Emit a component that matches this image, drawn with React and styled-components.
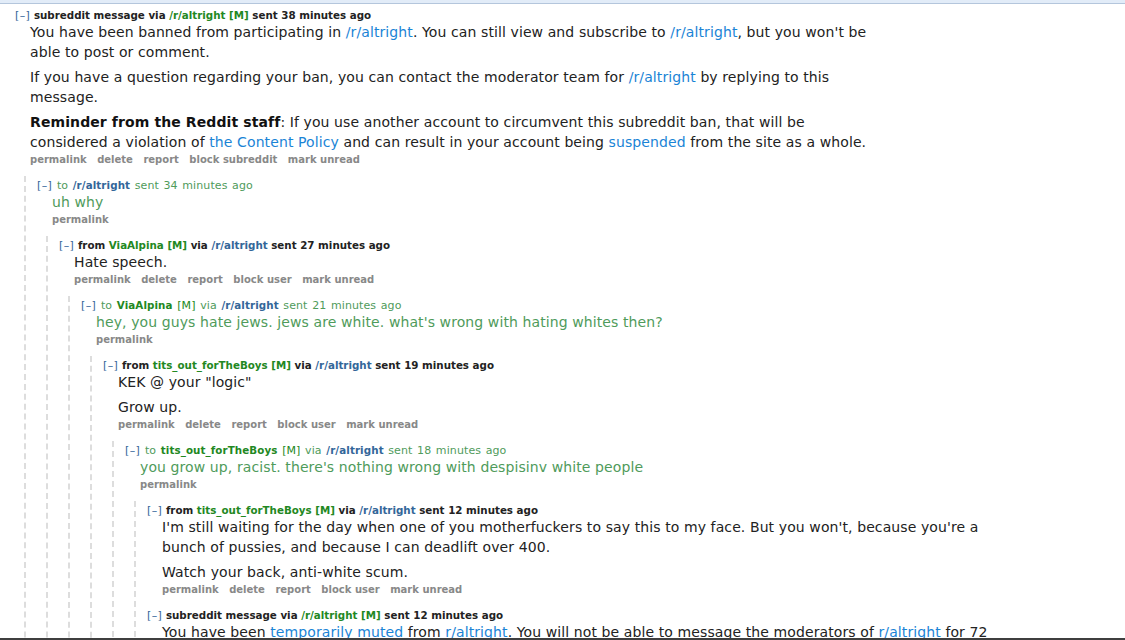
import React from "react";
import styled, { createGlobalStyle } from "styled-components";

const GREEN = "#228822";
const BLUE = "#336699";
const ME = "#4f9b5b";
const LINK = "#1a84d6";

const GlobalStyle = createGlobalStyle`
  html, body {
    margin: 0;
    padding: 0;
    background: #fff;
  }
  body {
    font-family: "DejaVu Sans", Verdana, sans-serif;
  }
`;

const Page = styled.div`
  height: 640px;
  box-sizing: border-box;
  overflow: hidden;
  border-bottom: 2px solid #3f3f3f;
`;

const TopBar = styled.div`
  height: 3px;
  background: #e2ecf8;
  border-bottom: 1px solid #b4c6dc;
`;

const Thread = styled.div`
  padding: 2px 0 0 15px;
`;

const Entry = styled.div`
  display: flex;
  flex-direction: column;
`;

const TaglineRow = styled.div`
  box-sizing: border-box;
  height: 15px;
  padding-top: 3px;
  font-size: ${(p) => (p.$me ? "11px" : "10.3px")};
  line-height: 12px;
  white-space: nowrap;
  color: ${(p) => (p.$me ? ME : "#222")};
  font-weight: ${(p) => (p.$me ? "normal" : "bold")};
  letter-spacing: ${(p) => (p.$me ? "0.1px" : "0")};
  word-spacing: ${(p) => (p.$me ? "1px" : "0")};
`;

const Expand = styled.span`
  color: ${BLUE};
  font-weight: normal;
  font-size: 11px;
  letter-spacing: 0.4px;
`;

const Sub = styled.span`
  font-weight: bold;
  font-size: 10.3px;
  color: ${(p) => (p.$tone === "green" ? GREEN : BLUE)};
`;

const Author = styled.span`
  font-weight: bold;
  font-size: 10.3px;
  color: ${GREEN};
`;

const Mod = styled.span`
  color: ${GREEN};
  font-weight: ${(p) => (p.$bold ? "bold" : "normal")};
  font-size: ${(p) => (p.$bold ? "10.3px" : "inherit")};
`;

const Link = styled.a`
  color: ${LINK};
  text-decoration: none;
`;

const Body = styled.div`
  margin-top: 1px;
  padding-left: 15px;
  max-width: 840px;
  font-size: 14px;
  line-height: 20px;
  letter-spacing: 0.1px;
  color: ${(p) => (p.$me ? ME : "#222")};

  p {
    margin: 0;
  }
  p + p {
    margin-top: 5px;
  }
  strong {
    color: #111;
  }
`;

const Buttons = styled.ul`
  list-style: none;
  margin: 1px 0 0;
  padding: 0 0 0 15px;
  display: flex;
  gap: 10.5px;
  font-size: 10px;
  line-height: 14px;
  font-weight: bold;
  color: #888;
  white-space: nowrap;
`;

const Children = styled.div`
  display: flex;
  flex-direction: column;
  gap: 9px;
  margin: 9px 0 0 9px;
  padding-left: 11px;
  border-left: 2px dashed #dddddd;
`;

const SUB_BUTTONS = ["permalink", "delete", "report", "block subreddit", "mark unread"];
const USER_BUTTONS = ["permalink", "delete", "report", "block user", "mark unread"];
const ME_BUTTONS = ["permalink"];

const thread = {
  kind: "sub",
  sent: "38 minutes",
  buttons: SUB_BUTTONS,
  body: [
    <>
      You have been banned from participating in <Link>/r/altright</Link>. You can still view and
      subscribe to <Link>/r/altright</Link>, but you won't be able to post or comment.
    </>,
    <>
      If you have a question regarding your ban, you can contact the moderator team for{" "}
      <Link>/r/altright</Link> by replying to this message.
    </>,
    <>
      <strong>Reminder from the Reddit staff</strong>: If you use another account to circumvent this
      subreddit ban, that will be considered a violation of <Link>the Content Policy</Link> and can
      result in your account being <Link>suspended</Link> from the site as a whole.
    </>,
  ],
  children: [
    {
      kind: "to",
      sent: "34 minutes",
      buttons: ME_BUTTONS,
      body: ["uh why"],
      children: [
        {
          kind: "from",
          author: "ViaAlpina",
          sent: "27 minutes",
          buttons: USER_BUTTONS,
          body: ["Hate speech."],
          children: [
            {
              kind: "to",
              author: "ViaAlpina",
              sent: "21 minutes",
              buttons: ME_BUTTONS,
              body: ["hey, you guys hate jews. jews are white. what's wrong with hating whites then?"],
              children: [
                {
                  kind: "from",
                  author: "tits_out_forTheBoys",
                  sent: "19 minutes",
                  buttons: USER_BUTTONS,
                  body: ['KEK @ your "logic"', "Grow up."],
                  children: [
                    {
                      kind: "to",
                      author: "tits_out_forTheBoys",
                      sent: "18 minutes",
                      buttons: ME_BUTTONS,
                      body: ["you grow up, racist. there's nothing wrong with despisinv white people"],
                      children: [
                        {
                          kind: "from",
                          author: "tits_out_forTheBoys",
                          sent: "12 minutes",
                          buttons: USER_BUTTONS,
                          body: [
                            "I'm still waiting for the day when one of you motherfuckers to say this to my face. But you won't, because you're a bunch of pussies, and because I can deadlift over 400.",
                            "Watch your back, anti-white scum.",
                          ],
                        },
                        {
                          kind: "sub",
                          sent: "12 minutes",
                          buttons: SUB_BUTTONS,
                          body: [
                            <>
                              You have been <Link>temporarily muted</Link> from <Link>r/altright</Link>.
                              You will not be able to message the moderators of <Link>r/altright</Link>{" "}
                              for 72 hours.
                            </>,
                          ],
                        },
                      ],
                    },
                  ],
                },
              ],
            },
          ],
        },
      ],
    },
  ],
};

function Tagline({ msg }) {
  if (msg.kind === "sub") {
    return (
      <TaglineRow $me={false}>
        <Expand>[–]</Expand> subreddit message via <Sub $tone="green">/r/altright</Sub>{" "}
        <Mod $bold>[M]</Mod> sent {msg.sent} ago
      </TaglineRow>
    );
  }
  if (msg.kind === "from") {
    return (
      <TaglineRow $me={false}>
        <Expand>[–]</Expand> from <Author>{msg.author}</Author> <Mod $bold>[M]</Mod> via{" "}
        <Sub $tone="blue">/r/altright</Sub> sent {msg.sent} ago
      </TaglineRow>
    );
  }
  return (
    <TaglineRow $me>
      <Expand>[–]</Expand> to{" "}
      {msg.author ? (
        <>
          <Author>{msg.author}</Author> <Mod>[M]</Mod> via{" "}
        </>
      ) : null}
      <Sub $tone="blue">/r/altright</Sub> sent {msg.sent} ago
    </TaglineRow>
  );
}

function Message({ msg }) {
  return (
    <Entry>
      <Tagline msg={msg} />
      <Body $me={msg.kind === "to"}>
        {msg.body.map((p, i) => (
          <p key={i}>{p}</p>
        ))}
      </Body>
      <Buttons>
        {msg.buttons.map((b) => (
          <li key={b}>{b}</li>
        ))}
      </Buttons>
      {msg.children && (
        <Children>
          {msg.children.map((c, i) => (
            <Message key={i} msg={c} />
          ))}
        </Children>
      )}
    </Entry>
  );
}

export default function App() {
  return (
    <>
      <GlobalStyle />
      <Page>
        <TopBar />
        <Thread>
          <Message msg={thread} />
        </Thread>
      </Page>
    </>
  );
}
